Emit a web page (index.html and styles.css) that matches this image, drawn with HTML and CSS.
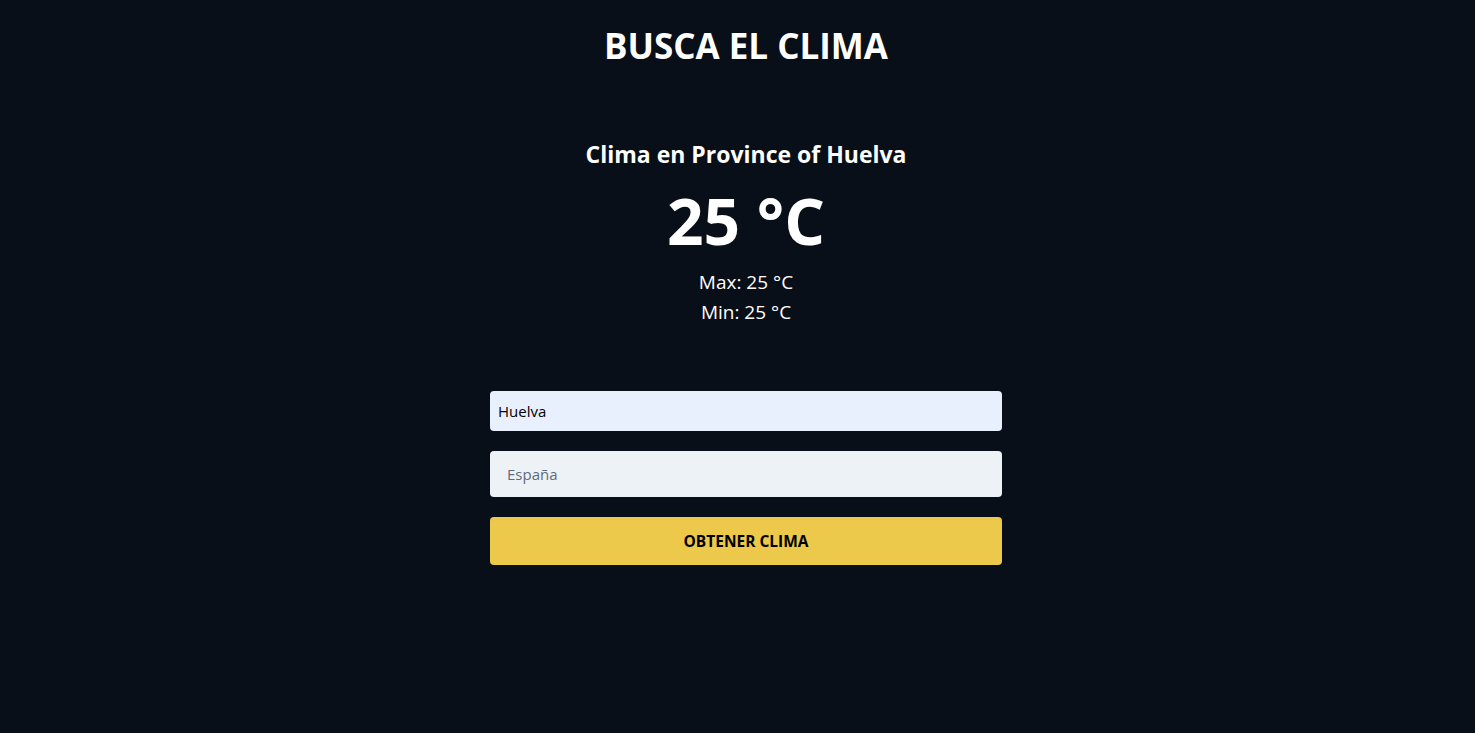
FILE: index.html
```html
<!DOCTYPE html>
<html lang="es">
<head>
<meta charset="utf-8">
<title>Busca el clima</title>
<link rel="stylesheet" href="styles.css">
</head>
<body>
<main class="page">
  <h1 class="title">BUSCA EL CLIMA</h1>
  <section class="weather">
    <h2 class="place">Clima en Province of Huelva</h2>
    <p class="temp">25 °C</p>
    <div class="ranges">
      <p class="range">Max: 25 °C</p>
      <p class="range">Min: 25 °C</p>
    </div>
  </section>
  <form class="form">
    <input class="field field-city" type="text" value="Huelva">
    <input class="field field-country" type="text" placeholder="España">
    <button class="submit" type="button">OBTENER CLIMA</button>
  </form>
</main>
</body>
</html>
```

FILE: styles.css
```css
* { box-sizing: border-box; }
html, body { margin: 0; padding: 0; }
body {
  background: #080f18;
  color: #ffffff;
  font-family: "Open Sans", "Noto Sans", sans-serif;
  min-height: 733px;
}
.page {
  display: flex;
  flex-direction: column;
  align-items: center;
  padding-left: 17px;
}
.title {
  margin: 24px 0 0;
  font-size: 35px;
  line-height: 44px;
  font-weight: 700;
}
.weather {
  display: flex;
  flex-direction: column;
  align-items: center;
  margin-top: 70px;
}
.place {
  margin: 0;
  font-size: 23px;
  line-height: 32px;
  font-weight: 700;
}
.temp {
  margin: 13px 0 0;
  font-size: 64px;
  line-height: 76px;
  font-weight: 700;
}
.ranges {
  margin-top: 8px;
  display: flex;
  flex-direction: column;
  align-items: center;
}
.range {
  margin: 0;
  font-size: 19px;
  line-height: 30px;
}
.form {
  width: 512px;
  margin-top: 64px;
  display: flex;
  flex-direction: column;
  gap: 20px;
}
.field {
  border: none;
  border-radius: 4px;
  font-family: inherit;
  font-size: 15px;
  color: #000;
  outline: none;
}
.field-city {
  height: 40px;
  padding: 0 8px;
  background: #e8f0fe;
}
.field-country {
  height: 46px;
  padding: 0 17px;
  background: #edf2f7;
}
.field-country::placeholder { color: #5f6b7c; }
.submit {
  height: 48px;
  border: none;
  border-radius: 4px;
  background: #ecc94b;
  color: #000;
  font-family: inherit;
  font-weight: 700;
  font-size: 15.5px;
}
```
